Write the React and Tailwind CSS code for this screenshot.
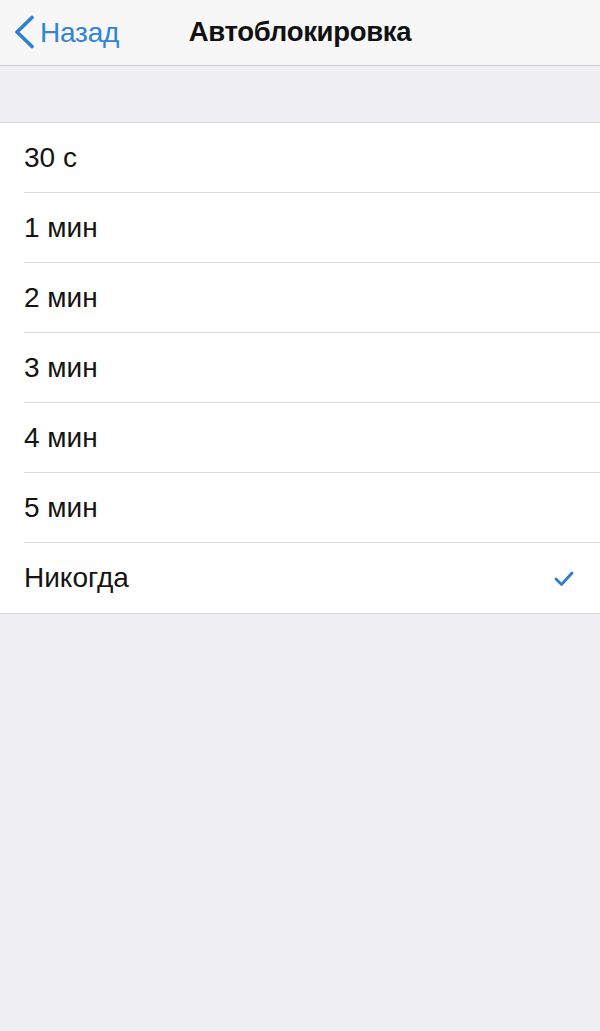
import React from "react";

const items = ["30 с", "1 мин", "2 мин", "3 мин", "4 мин", "5 мин", "Никогда"];

export default function App() {
  return (
    <div
      className="w-[600px] h-[1031px] bg-[#efeff4] overflow-hidden"
      style={{ fontFamily: '"Liberation Sans", Arial, sans-serif' }}
    >
      <div className="relative h-[66px] bg-[#f7f7f8] border-b border-[#cfcfd4] flex items-center justify-center">
        <div className="absolute left-0 top-0 h-[65px] flex items-center pl-[13px] text-[#3183d4]">
          <svg width="24" height="34" viewBox="0 0 24 34" className="mt-[-1px]">
            <path
              d="M19 2.5 L4 17 L19 31.5"
              fill="none"
              stroke="#2f7fd2"
              strokeWidth="3.6"
              strokeLinecap="round"
              strokeLinejoin="round"
            />
          </svg>
          <span className="ml-[3px] text-[28px] leading-none tracking-[-0.2px]">Назад</span>
        </div>
        <span className="text-[27.5px] font-bold text-[#111] leading-none tracking-[-0.3px] mt-[-1px]">
          Автоблокировка
        </span>
      </div>
      <div className="h-[56px]" />
      <div className="bg-white border-t border-b border-[#d6d6da]">
        {items.map((t, i) => (
          <div key={t} className="relative h-[70px] flex items-center pl-[24px] pr-[26px]">
            <span className="text-[28px] text-[#141414] leading-none flex-1">{t}</span>
            {t === "Никогда" && (
              <svg width="20" height="17" viewBox="0 0 20 17">
                <path
                  d="M2 9 L7.5 14.5 L18 3"
                  fill="none"
                  stroke="#2f7bcf"
                  strokeWidth="2.8"
                  strokeLinecap="round"
                  strokeLinejoin="round"
                />
              </svg>
            )}
            {i < items.length - 1 && (
              <div className="absolute left-[24px] right-0 bottom-0 h-px bg-[#dadade]" />
            )}
          </div>
        ))}
      </div>
    </div>
  );
}
